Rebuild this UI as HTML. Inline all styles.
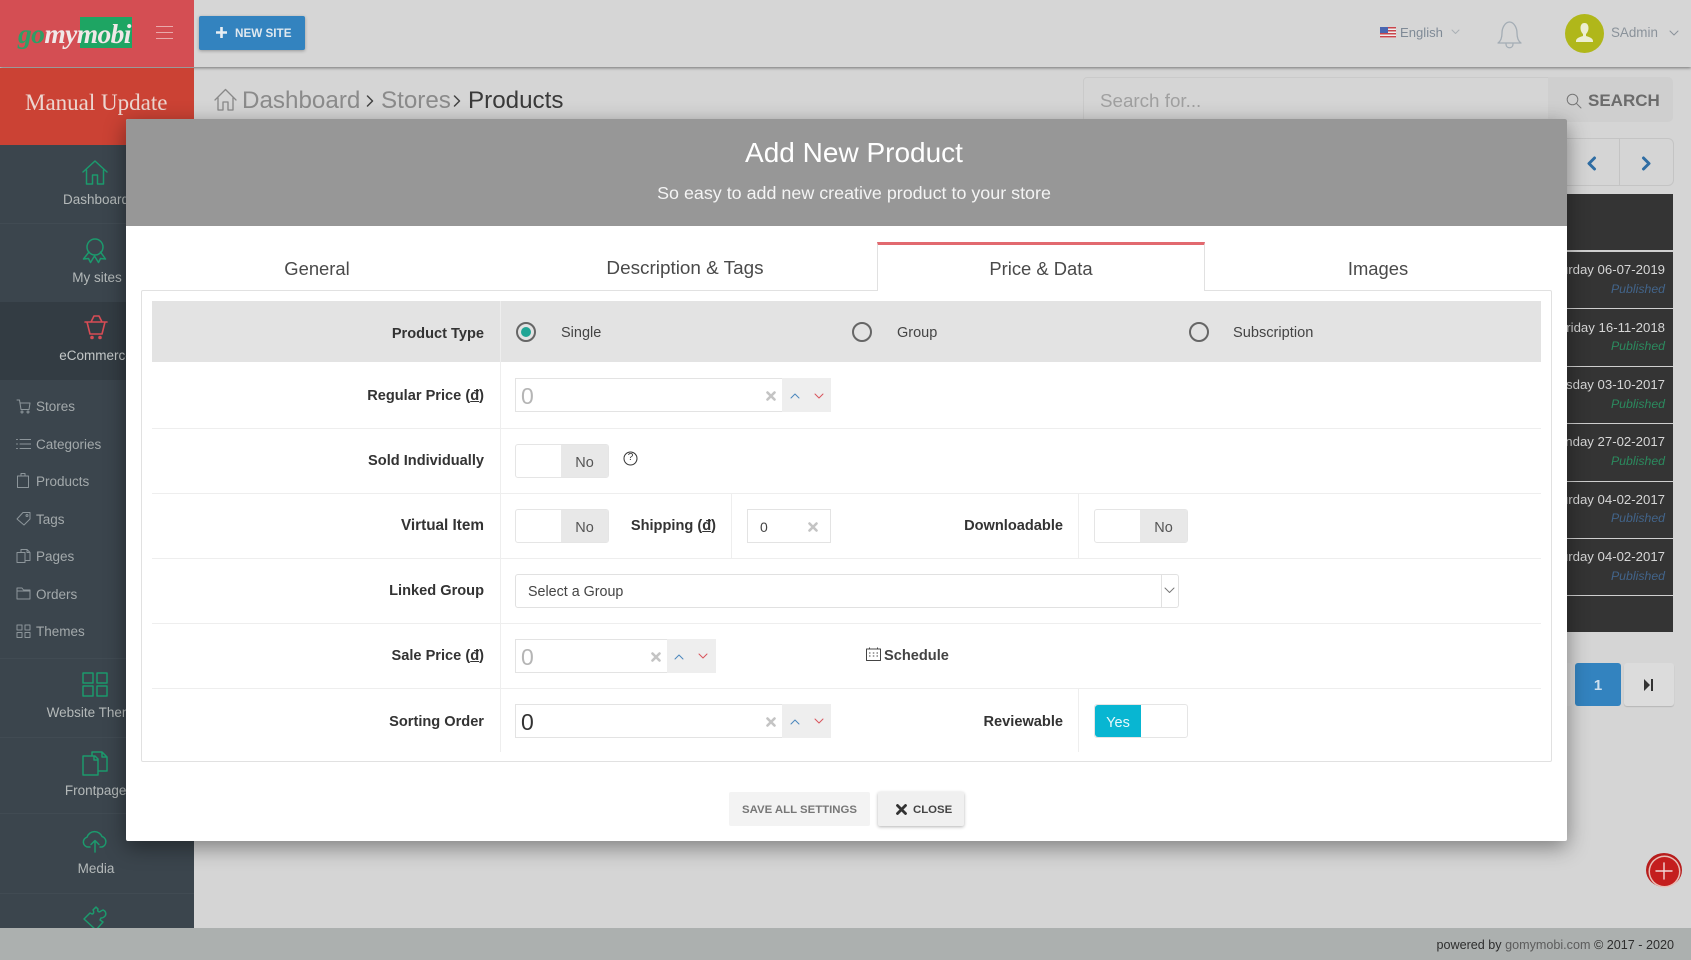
<!DOCTYPE html>
<html><head><meta charset="utf-8"><title>Add New Product</title>
<style>
html,body{margin:0;padding:0}
body{width:1691px;height:960px;position:relative;overflow:hidden;background:#d5d5d5;font-family:"Liberation Sans",Arial,sans-serif;color:#333}
.a,.t,svg.i{position:absolute}
.t{white-space:nowrap;line-height:20px;margin-top:1px}
.r{text-align:right}
.c{text-align:center;transform:translateX(-50%)}
.b{font-weight:bold}
.side{color:#b4b9b9;font-size:13.5px}
.sub{color:#a3a9ab;font-size:13.5px;left:36px}
.lab{font-weight:bold;font-size:14.6px;color:#333;text-align:right}
.inp{position:absolute;background:#fff;border:1px solid #e3e3e3;box-sizing:border-box;height:34px}
.spin{position:absolute;background:#eee;height:34px}
.tog{position:absolute;width:94px;height:34px;box-sizing:border-box;border:1px solid #e5e5e5;border-radius:3px;background:#fff;overflow:hidden}
.tog i{position:absolute;right:0;top:0;bottom:0;width:47px;background:#e8e8e8}
.tog b{position:absolute;right:0;width:47px;text-align:center;font-weight:normal;font-size:14.5px;line-height:33px;top:2px;color:#555}
.sep{position:absolute;left:152px;width:1389px;height:1px;background:#eee}
.v{position:absolute;width:1px;background:#eee}
.rad{position:absolute;width:20px;height:20px;box-sizing:border-box;border:2px solid #666;border-radius:50%}
.date{right:26px;color:#d6d6d6;font-size:13.2px}
.pub{right:26px;font-size:12.3px;font-style:italic}
.row{position:absolute;left:1500px;width:173px;height:2px;background:#cfcfcf}
.tab{font-size:18.4px;color:#4a4a4a}
.bc{font-size:24.2px;line-height:30px}
svg.i{fill:none;stroke-linecap:round;stroke-linejoin:round}
</style></head><body>

<!-- header -->
<div class="a" style="left:0;top:0;width:1691px;height:67px;background:#d6d6d6;box-shadow:0 1px 3px rgba(0,0,0,.45)"></div>
<div class="a" style="left:0;top:0;width:194px;height:67px;background:#d44e53"></div>
<div class="a" style="left:80px;top:17px;width:52px;height:31px;background:#1ea563"></div>
<div class="t b" style="left:18px;top:19px;font:italic bold 27.5px/28px 'Liberation Serif',serif;letter-spacing:-.6px;color:#f0e8e8"><span style="color:#2f9f66">go</span>mymobi</div>
<div class="a" style="left:156px;top:26px;width:17px;height:1px;background:#e9a9ab"></div>
<div class="a" style="left:156px;top:32px;width:17px;height:1px;background:#e9a9ab"></div>
<div class="a" style="left:156px;top:38px;width:17px;height:1px;background:#e9a9ab"></div>
<div class="a" style="left:199px;top:16px;width:106px;height:34px;background:#3383bf;border-radius:2px;box-shadow:0 1px 3px rgba(0,0,0,.3)"></div>
<svg class="i" style="left:215px;top:26px" width="13" height="13" viewBox="0 0 13 13"><path d="M6.500 1v11M1 6.500h11" stroke="#e8eef3" stroke-width="2.600" stroke-linecap="butt"/></svg>
<div class="t b" style="left:235px;top:23px;font-size:11.7px;color:#dfe8ef">NEW SITE</div>

<div class="a" style="left:1380px;top:27px;width:16px;height:11px;background:repeating-linear-gradient(#c9454c 0 1.5px,#eee 1.5px 3px)"></div>
<div class="a" style="left:1380px;top:27px;width:8px;height:6px;background:#4a66b0"></div>
<div class="t" style="left:1400px;top:22px;font-size:13.1px;color:#7f8a96">English</div>
<svg class="i" style="left:1451px;top:29px" width="9" height="6" viewBox="0 0 9 6"><path d="M1 1l3.500 3.500L8 1" stroke="#aab0b5" stroke-width="1"/></svg>
<svg class="i" style="left:1496px;top:20px" width="27" height="30" viewBox="0 0 27 30"><path d="M2 23c3-2 4-5 4-10 0-5 3-11 7.500-11S21 8 21 13c0 5 1 8 4 10zM10 24c0 5 7 5 7 0" stroke="#a4adb5" stroke-width="1.300"/></svg>
<div class="a" style="left:1565px;top:14px;width:39px;height:39px;border-radius:50%;background:#b0b71a"></div>
<svg class="i" style="left:1574px;top:22px" width="21" height="22" viewBox="0 0 21 22"><path d="M10.500 1c3 0 4 2.500 4 5 0 3-1.500 5-2.500 6v2c3 1 7 2 7 5v1H2v-1c0-3 4-4 7-5v-2C8 11 6.500 9 6.500 6c0-2.500 1-5 4-5z" fill="#eceed0"/></svg>
<div class="t" style="left:1611px;top:22px;font-size:13.4px;color:#8a929a">SAdmin</div>
<svg class="i" style="left:1669px;top:30px" width="10" height="6" viewBox="0 0 10 6"><path d="M1 1l4 4 4-4" stroke="#8a929a" stroke-width="1"/></svg>

<!-- breadcrumb bar -->
<svg class="i" style="left:214px;top:88px" width="23" height="23" viewBox="0 0 23 23"><path d="M1 12L11.500 1.500 22 12M4 10v12h5v-8h5v8h5V10" stroke="#888" stroke-width="1.300"/></svg>
<div class="t bc" style="left:242px;top:85px;color:#8b8b8b">Dashboard</div>
<svg class="i" style="left:366px;top:95px" width="9" height="12" viewBox="0 0 9 12"><path d="M1.500 1l5 5-5 5" stroke="#444" stroke-width="1.500"/></svg>
<div class="t bc" style="left:381px;top:85px;color:#8b8b8b">Stores</div>
<svg class="i" style="left:453px;top:95px" width="9" height="12" viewBox="0 0 9 12"><path d="M1.500 1l5 5-5 5" stroke="#444" stroke-width="1.500"/></svg>
<div class="t bc" style="left:468px;top:85px;color:#3a3a3a">Products</div>
<div class="a" style="left:1083px;top:77px;width:466px;height:45px;box-sizing:border-box;border:1px solid #cacaca;border-radius:4px 0 0 4px"></div>
<div class="t" style="left:1100px;top:90px;font-size:18.8px;color:#a0a0a0">Search for...</div>
<div class="a" style="left:1548px;top:77px;width:125px;height:45px;background:#cfcfcf;border-radius:0 5px 5px 0"></div>
<svg class="i" style="left:1566px;top:93px" width="16" height="16" viewBox="0 0 16 16"><circle cx="6.500" cy="6.500" r="5.300" stroke="#777" stroke-width="1"/><path d="M10.500 10.500l4.500 4.500" stroke="#777" stroke-width="1"/></svg>
<div class="t b" style="left:1588px;top:90px;font-size:17px;color:#6b6b6b">SEARCH</div>

<!-- prev next -->
<div class="a" style="left:1500px;top:138px;width:174px;height:48px;box-sizing:border-box;border:1px solid #c4c4c4;border-radius:6px"></div>
<div class="a" style="left:1619px;top:139px;width:1px;height:46px;background:#c4c4c4"></div>
<svg class="i" style="left:1586px;top:156px" width="11" height="15" viewBox="0 0 11 15"><path d="M8.500 2L3 7.500 8.500 13" stroke="#2f6da3" stroke-width="3"/></svg>
<svg class="i" style="left:1641px;top:156px" width="11" height="15" viewBox="0 0 11 15"><path d="M2.500 2L8 7.500 2.500 13" stroke="#2f6da3" stroke-width="3"/></svg>

<!-- table -->
<div class="a" style="left:1500px;top:194px;width:173px;height:438px;background:#343434"></div>
<div class="row" style="top:250px"></div><div class="row" style="top:308px;height:1px"></div><div class="row" style="top:366px;height:1px"></div><div class="row" style="top:423px;height:1px"></div><div class="row" style="top:481px;height:1px"></div><div class="row" style="top:538px;height:1px"></div><div class="row" style="top:595px;height:1px"></div>
<div class="t date" style="top:259px">Saturday 06-07-2019</div><div class="t pub" style="top:278px;color:#42648a">Published</div>
<div class="t date" style="top:317px">Friday 16-11-2018</div><div class="t pub" style="top:335px;color:#2b8a5e">Published</div>
<div class="t date" style="top:374px">Tuesday 03-10-2017</div><div class="t pub" style="top:393px;color:#2b8a5e">Published</div>
<div class="t date" style="top:431px">Monday 27-02-2017</div><div class="t pub" style="top:450px;color:#2b8a5e">Published</div>
<div class="t date" style="top:489px">Saturday 04-02-2017</div><div class="t pub" style="top:507px;color:#42648a">Published</div>
<div class="t date" style="top:546px">Saturday 04-02-2017</div><div class="t pub" style="top:565px;color:#42648a">Published</div>

<!-- pagination -->
<div class="a" style="left:1540px;top:663px;width:32px;height:43px;background:#d9d9d9;border-radius:3px"></div>
<div class="a" style="left:1575px;top:663px;width:46px;height:43px;background:#3383bf;border-radius:3px"></div>
<div class="t b" style="left:1575px;width:46px;text-align:center;top:675px;font-size:15px;color:#cfe0ee">1</div>
<div class="a" style="left:1624px;top:663px;width:50px;height:43px;background:#dcdcdc;border-radius:3px;box-shadow:0 1px 1px rgba(0,0,0,.15)"></div>
<svg class="i" style="left:1644px;top:679px" width="10" height="12" viewBox="0 0 10 12"><path d="M0 0l6 6-6 6z M7 0h2v12H7z" fill="#333"/></svg>

<!-- red plus -->
<div class="a" style="left:1646px;top:853px;width:36px;height:34px;border-radius:50%;background:#b71c1c"></div>
<div class="a" style="left:1650px;top:857px;width:29px;height:29px;border-radius:50%;background:#c41e1e;box-shadow:0 0 0 1.500px #e8bdb5"></div>
<svg class="i" style="left:1655px;top:862px" width="18" height="18" viewBox="0 0 18 18"><path d="M9 1v16M1 9h16" stroke="#f2d8d8" stroke-width="1.400"/></svg>

<!-- sidebar -->
<div class="a" style="left:0;top:68px;width:194px;height:77px;background:#cb4234"></div>
<div class="t" style="left:25px;top:91px;font:23px/22px 'Liberation Serif',serif;color:#ecd6d0">Manual Update</div>
<div class="a" style="left:0;top:145px;width:194px;height:785px;background:#3b454d"></div>
<div class="a" style="left:0;top:302px;width:194px;height:78px;background:#333c43"></div>
<div class="a" style="left:0;top:223px;width:194px;height:1px;background:#414b53"></div>
<div class="a" style="left:0;top:658px;width:194px;height:1px;background:#414b53"></div>
<div class="a" style="left:0;top:737px;width:194px;height:1px;background:#414b53"></div>
<div class="a" style="left:0;top:813px;width:194px;height:1px;background:#414b53"></div>
<div class="a" style="left:0;top:893px;width:194px;height:1px;background:#414b53"></div>

<svg class="i" style="left:82px;top:160px" width="26" height="25" viewBox="0 0 26 25"><path d="M1 12L13 1l12 11M4.500 10v14h6v-9h5v9h6V10" stroke="#1c9a6d" stroke-width="1.500"/></svg>
<div class="t side c" style="left:96px;top:189px">Dashboard</div>
<svg class="i" style="left:82px;top:237px" width="26" height="27" viewBox="0 0 26 27"><circle cx="13" cy="10" r="8" stroke="#1c9a6d" stroke-width="1.500"/><path d="M7 15L1.500 22l5-.5 2 4 4-6.500 4 6.500 2-4 5 .5L18.500 15" stroke="#1c9a6d" stroke-width="1.500"/></svg>
<div class="t side c" style="left:97px;top:267px">My sites</div>
<svg class="i" style="left:84px;top:314px" width="24" height="26" viewBox="0 0 24 26"><path d="M3 8h18l-3 12H6zM1 8h22M7 8l3-6h5l3 6" stroke="#d74c55" stroke-width="1.600"/><circle cx="8" cy="23.500" r="1.800" fill="#d74c55"/><circle cx="16" cy="23.500" r="1.800" fill="#d74c55"/></svg>
<div class="t side c" style="left:96px;top:345px;color:#c4c8c8">eCommerce</div>

<svg class="i" style="left:16px;top:399px" width="15" height="15" viewBox="0 0 15 15"><path d="M1 1h2.500L5 10.500h8L14 4H4" stroke="#8c959a"/><circle cx="6" cy="13" r="1" stroke="#8c959a"/><circle cx="12" cy="13" r="1" stroke="#8c959a"/></svg>
<div class="t sub" style="top:396px">Stores</div>
<svg class="i" style="left:16px;top:438px" width="15" height="12" viewBox="0 0 15 12"><path d="M4 1.500h11M4 6h11M4 10.500h11M.5 1.500h1M.5 6h1M.5 10.500h1" stroke="#8c959a"/></svg>
<div class="t sub" style="top:434px">Categories</div>
<svg class="i" style="left:16px;top:473px" width="14" height="15" viewBox="0 0 14 15"><path d="M1.500 3h11v11.500h-11zM5 3V.5h4V3" stroke="#8c959a"/></svg>
<div class="t sub" style="top:471px">Products</div>
<svg class="i" style="left:16px;top:511px" width="15" height="15" viewBox="0 0 15 15"><path d="M1 8l6-6.500h7v6.500L8 14z" stroke="#8c959a"/><circle cx="11" cy="4.500" r="1" stroke="#8c959a"/></svg>
<div class="t sub" style="top:509px">Tags</div>
<svg class="i" style="left:16px;top:549px" width="15" height="14" viewBox="0 0 15 14"><path d="M1 3.500h8v10H1zM5 3.500V.5h6l3 3v8h-5M11 .5v3h3" stroke="#8c959a"/></svg>
<div class="t sub" style="top:546px">Pages</div>
<svg class="i" style="left:16px;top:587px" width="15" height="13" viewBox="0 0 15 13"><path d="M1 12V1h5l1.500 2H14v9zM1 4h13" stroke="#8c959a"/></svg>
<div class="t sub" style="top:584px">Orders</div>
<svg class="i" style="left:16px;top:624px" width="15" height="14" viewBox="0 0 15 14"><path d="M1 1h5v5H1zM9 1h5v5H9zM1 8.500h5v5H1zM9 8.500h5v5H9z" stroke="#8c959a"/></svg>
<div class="t sub" style="top:621px">Themes</div>

<svg class="i" style="left:82px;top:672px" width="26" height="25" viewBox="0 0 26 25"><path d="M1 1h10v10H1zM15 1h10v10H15zM1 14h10v10H1zM15 14h10v10H15z" stroke="#1c9a6d" stroke-width="1.500"/></svg>
<div class="t side c" style="left:97px;top:702px">Website Themes</div>
<svg class="i" style="left:82px;top:751px" width="26" height="25" viewBox="0 0 26 25"><path d="M1 5h12l3 3v16H1zM12 5v4h4M10 5V1h10l5 5v14h-9M20 1v5h5" stroke="#1c9a6d" stroke-width="1.500"/></svg>
<div class="t side c" style="left:99px;top:780px">Frontpages</div>
<svg class="i" style="left:82px;top:830px" width="26" height="23" viewBox="0 0 26 23"><path d="M8 17H6a5 5 0 0 1-1-9.800A8 8 0 0 1 20 6.500 5.500 5.500 0 0 1 20 17h-2M13 22V11M9 14.500l4-4 4 4" stroke="#1c9a6d" stroke-width="1.500"/></svg>
<div class="t side c" style="left:96px;top:858px">Media</div>
<svg class="i" style="left:83px;top:906px" width="25" height="24" viewBox="0 0 25 24"><path d="M1 13l6-6 2 1c2 0 2-3 1-4l3-3 2 2c-1 2 1 4 3 2l2-1c3 1 4 5 1 7-1 1-2 1-3 1l-1 2 3 2-7 8z" stroke="#1c9a6d" stroke-width="1.500"/></svg>

<!-- footer -->
<div class="a" style="left:0;top:928px;width:1691px;height:32px;background:#acb0af"></div>
<div class="t" style="right:17px;top:935px;margin-top:0;font-size:12.6px;color:#2e2e2e">powered by <span style="color:#5c5c5c">gomymobi.com</span> © 2017 - 2020</div>

<!-- modal -->
<div class="a" style="left:126px;top:119px;width:1441px;height:722px;background:#fff;border-radius:2px;box-shadow:0 6px 22px rgba(0,0,0,.42)"></div>
<div class="a" style="left:126px;top:119px;width:1441px;height:107px;background:#979797;border-radius:2px 2px 0 0"></div>
<div class="t" style="left:854px;top:138px;margin-top:0;font-size:28px;line-height:30px;color:#fff;transform:translateX(-50%)">Add New Product</div>
<div class="t" style="left:854px;top:182px;font-size:17.9px;color:#f4f4f4;transform:translateX(-50%)">So easy to add new creative product to your store</div>

<!-- tabs -->
<div class="a" style="left:141px;top:290px;width:1411px;height:472px;box-sizing:border-box;border:1px solid #e1e1e1;border-radius:2px"></div>
<div class="a" style="left:877px;top:242px;width:328px;height:49px;box-sizing:border-box;background:#fff;border:1px solid #e1e1e1;border-top:3px solid #e2696f;border-bottom:none"></div>
<div class="t c tab" style="left:317px;top:258px">General</div>
<div class="t c tab" style="left:685px;top:258px;font-size:18.9px">Description &amp; Tags</div>
<div class="t c tab" style="left:1041px;top:258px">Price &amp; Data</div>
<div class="t c tab" style="left:1378px;top:258px">Images</div>

<!-- rows -->
<div class="a" style="left:152px;top:301px;width:1389px;height:61px;background:#e3e3e3"></div>
<div class="v" style="left:500px;top:301px;height:451px"></div>
<div class="sep" style="top:428px"></div><div class="sep" style="top:493px"></div><div class="sep" style="top:558px"></div><div class="sep" style="top:623px"></div><div class="sep" style="top:688px"></div>
<div class="v" style="left:731px;top:493px;height:65px"></div>
<div class="v" style="left:1078px;top:493px;height:65px"></div>
<div class="v" style="left:1078px;top:688px;height:64px"></div>

<div class="t lab" style="right:1207px;top:323px">Product Type</div>
<div class="t lab" style="right:1207px;top:385px">Regular Price (<u>đ</u>)</div>
<div class="t lab" style="right:1207px;top:450px">Sold Individually</div>
<div class="t lab" style="right:1207px;top:515px;font-size:15.3px">Virtual Item</div>
<div class="t lab" style="right:975px;top:515px">Shipping (<u>đ</u>)</div>
<div class="t lab" style="right:628px;top:515px">Downloadable</div>
<div class="t lab" style="right:1207px;top:580px">Linked Group</div>
<div class="t lab" style="right:1207px;top:645px">Sale Price (<u>đ</u>)</div>
<div class="t lab" style="right:1207px;top:711px">Sorting Order</div>
<div class="t lab" style="right:628px;top:711px">Reviewable</div>

<!-- radios -->
<div class="rad" style="left:516px;top:322px"></div><div class="a" style="left:521px;top:327px;width:10px;height:10px;border-radius:50%;background:#20a595"></div>
<div class="t" style="left:561px;top:322px;font-size:14.5px;color:#444">Single</div>
<div class="rad" style="left:852px;top:322px"></div>
<div class="t" style="left:897px;top:322px;font-size:14.5px;color:#444">Group</div>
<div class="rad" style="left:1189px;top:322px"></div>
<div class="t" style="left:1233px;top:322px;font-size:14.6px;color:#444">Subscription</div>

<!-- regular -->
<div class="inp" style="left:515px;top:378px;width:268px"></div><div class="spin" style="left:782px;top:378px;width:49px"></div>
<div class="t" style="left:521px;top:385px;font-size:23px;color:#b5b5b5">0</div>
<svg class="i" style="left:766px;top:391px" width="10" height="10" viewBox="0 0 10 10"><path d="M1.500 1.500l7 7M8.500 1.500l-7 7" stroke="#c4c4c4" stroke-width="2.600"/></svg>
<svg class="i" style="left:790px;top:393px" width="10" height="6" viewBox="0 0 10 6"><path d="M1 5l4-4 4 4" stroke="#4a86bd" stroke-width="1"/></svg>
<svg class="i" style="left:814px;top:393px" width="10" height="6" viewBox="0 0 10 6"><path d="M1 1l4 4 4-4" stroke="#d9535b" stroke-width="1"/></svg>

<!-- sold ind -->
<div class="tog" style="left:515px;top:444px"><i></i><b>No</b></div>
<svg class="i" style="left:623px;top:451px" width="15" height="15" viewBox="0 0 15 15"><circle cx="7.500" cy="7.500" r="6.500" stroke="#333" stroke-width="1"/></svg>
<div class="t" style="left:623px;width:15px;text-align:center;top:447px;font-size:10px;color:#333">?</div>

<!-- virtual -->
<div class="tog" style="left:515px;top:509px"><i></i><b>No</b></div>
<div class="inp" style="left:747px;top:509px;width:84px"></div>
<div class="t" style="left:760px;top:516px;font-size:14px;color:#444">0</div>
<svg class="i" style="left:808px;top:522px" width="10" height="10" viewBox="0 0 10 10"><path d="M1.500 1.500l7 7M8.500 1.500l-7 7" stroke="#c4c4c4" stroke-width="2.600"/></svg>
<div class="tog" style="left:1094px;top:509px"><i></i><b>No</b></div>

<!-- linked -->
<div class="a" style="left:515px;top:574px;width:664px;height:34px;box-sizing:border-box;border:1px solid #e1e1e1;border-radius:3px"></div>
<div class="v" style="left:1161px;top:574px;height:34px;background:#e1e1e1"></div>
<div class="t" style="left:528px;top:581px;font-size:14.3px;color:#444">Select a Group</div>
<svg class="i" style="left:1164px;top:587px" width="11" height="7" viewBox="0 0 11 7"><path d="M1 1l4.500 4.500L10 1" stroke="#777" stroke-width="1"/></svg>

<!-- sale -->
<div class="inp" style="left:515px;top:639px;width:153px"></div><div class="spin" style="left:667px;top:639px;width:49px"></div>
<div class="t" style="left:521px;top:646px;font-size:23px;color:#b5b5b5">0</div>
<svg class="i" style="left:651px;top:652px" width="10" height="10" viewBox="0 0 10 10"><path d="M1.500 1.500l7 7M8.500 1.500l-7 7" stroke="#c4c4c4" stroke-width="2.600"/></svg>
<svg class="i" style="left:674px;top:654px" width="10" height="6" viewBox="0 0 10 6"><path d="M1 5l4-4 4 4" stroke="#4a86bd" stroke-width="1"/></svg>
<svg class="i" style="left:698px;top:653px" width="10" height="6" viewBox="0 0 10 6"><path d="M1 1l4 4 4-4" stroke="#d9535b" stroke-width="1"/></svg>
<svg class="i" style="left:866px;top:647px" width="15" height="14" viewBox="0 0 15 14"><path d="M.5 2h14v11.500H.5zM3.500 .5v2M11.500 .5v2M3 6h1.500M6.800 6h1.500M10.500 6H12M3 9h1.500M6.800 9h1.500M10.500 9H12" stroke="#444" stroke-width="1" stroke-linecap="butt"/></svg>
<div class="t lab" style="left:884px;top:645px;color:#444">Schedule</div>

<!-- sorting -->
<div class="inp" style="left:515px;top:704px;width:268px"></div><div class="spin" style="left:782px;top:704px;width:49px"></div>
<div class="t" style="left:521px;top:711px;font-size:23px;color:#333">0</div>
<svg class="i" style="left:766px;top:717px" width="10" height="10" viewBox="0 0 10 10"><path d="M1.500 1.500l7 7M8.500 1.500l-7 7" stroke="#c4c4c4" stroke-width="2.600"/></svg>
<svg class="i" style="left:790px;top:719px" width="10" height="6" viewBox="0 0 10 6"><path d="M1 5l4-4 4 4" stroke="#4a86bd" stroke-width="1"/></svg>
<svg class="i" style="left:814px;top:718px" width="10" height="6" viewBox="0 0 10 6"><path d="M1 1l4 4 4-4" stroke="#d9535b" stroke-width="1"/></svg>
<div class="a" style="left:1094px;top:704px;width:94px;height:34px;box-sizing:border-box;border:1px solid #e5e5e5;border-radius:3px"></div>
<div class="a" style="left:1095px;top:705px;width:46px;height:32px;background:#08b6d2;border-radius:3px 0 0 3px"></div>
<div class="t" style="left:1095px;width:46px;text-align:center;top:712px;font-size:14.5px;color:#e8f8fb">Yes</div>

<!-- buttons -->
<div class="a" style="left:729px;top:792px;width:141px;height:34px;background:#f3f3f3;border-radius:2px"></div>
<div class="t b" style="left:729px;width:141px;text-align:center;top:799px;font-size:11.4px;color:#777">SAVE ALL SETTINGS</div>
<div class="a" style="left:878px;top:792px;width:86px;height:34px;background:#f0f0f0;border-radius:2px;box-shadow:0 1px 3px rgba(0,0,0,.3)"></div>
<svg class="i" style="left:896px;top:804px" width="11" height="11" viewBox="0 0 11 11"><path d="M1.500 1.500l8 8M9.500 1.500l-8 8" stroke="#333" stroke-width="2.800"/></svg>
<div class="t b" style="left:913px;top:799px;font-size:11.4px;color:#444">CLOSE</div>

</body></html>
